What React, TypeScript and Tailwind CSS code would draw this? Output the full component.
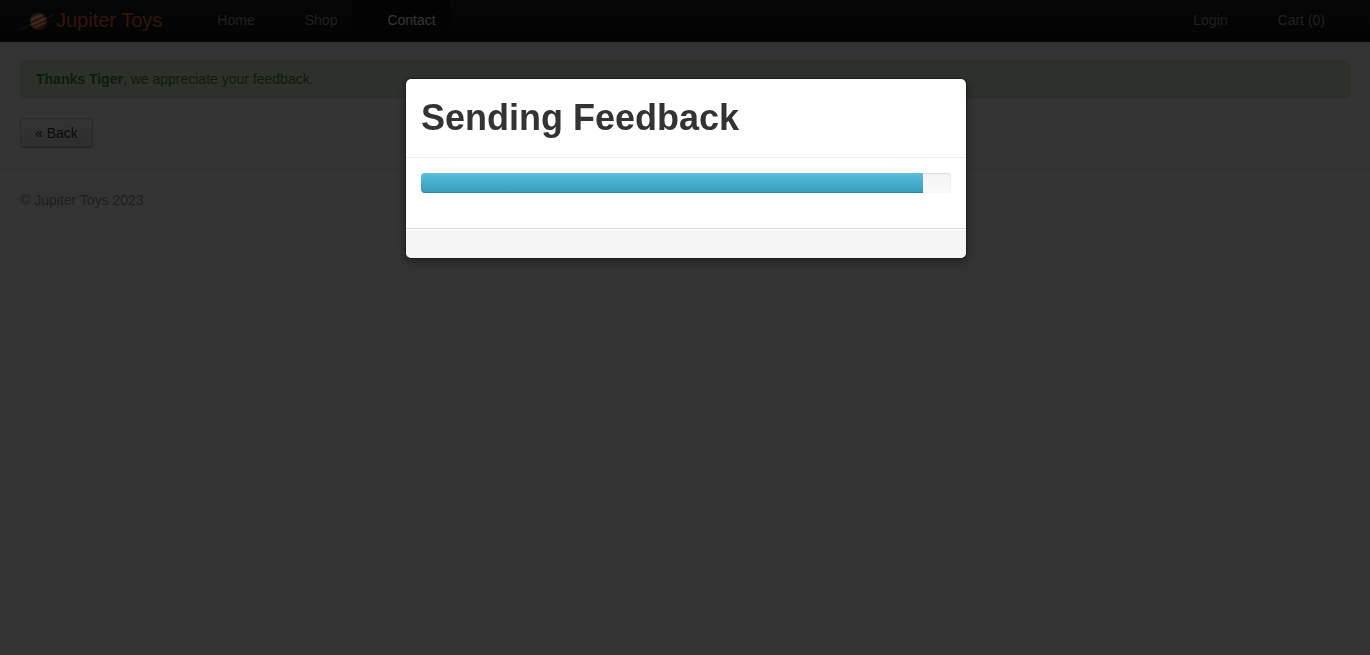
import React from "react";

const navLink =
  "block py-[10px] pl-[35px] pr-[15px] text-[#999] [text-shadow:0_-1px_0_rgba(0,0,0,.25)]";
const activeLink =
  "block bg-[#111] pt-[10px] pb-[11px] pl-[35px] pr-[15px] text-white shadow-[inset_0_3px_8px_rgba(0,0,0,.125)] [text-shadow:0_-1px_0_rgba(0,0,0,.25)]";

function PlanetLogo() {
  return (
    <svg viewBox="0 0 34 24" className="mt-px h-6 w-[34px]" aria-hidden="true">
      <defs>
        <radialGradient id="shade" cx="0.45" cy="0.45" r="0.6">
          <stop offset="0.6" stopColor="#400" stopOpacity="0" />
          <stop offset="1" stopColor="#400" stopOpacity="0.6" />
        </radialGradient>
        <clipPath id="disc">
          <circle cx="18.5" cy="12.5" r="8.5" />
        </clipPath>
      </defs>
      <path d="M0 20.5 L34 5.5" stroke="#777" strokeWidth="0.7" />
      <g clipPath="url(#disc)">
        <rect x="9" y="3" width="20" height="20" fill="#ee7c4a" />
        <g transform="rotate(-24 18.5 12.5)">
          <rect x="8" y="4" width="21" height="2.5" fill="#b5664a" />
          <rect x="8" y="6.5" width="21" height="3" fill="#ffd2ac" />
          <rect x="8" y="9.5" width="21" height="2" fill="#d8572c" />
          <rect x="8" y="11.5" width="21" height="2" fill="#ffe6cc" />
          <rect x="8" y="13.5" width="21" height="2" fill="#e0622f" />
          <rect x="8" y="15.5" width="21" height="1.5" fill="#ffc39a" />
          <rect x="8" y="18" width="21" height="4" fill="#c0502e" />
        </g>
        <circle cx="18.5" cy="12.5" r="8.5" fill="url(#shade)" />
      </g>
    </svg>
  );
}

function Navbar() {
  return (
    <header className="flex h-[42px] items-start justify-between overflow-visible border-b border-[#252525] bg-linear-to-b from-[#222] to-[#111] px-5 shadow-[0_1px_10px_rgba(0,0,0,.1)]">
      <nav className="flex" aria-label="Main">
        <a
          href="#home"
          className="flex items-start gap-[2px] pt-2 pr-5 text-xl leading-6 text-[#f07030] [text-shadow:0_-1px_0_rgba(0,0,0,.25)]"
        >
          <PlanetLogo />
          Jupiter Toys
        </a>
        <ul className="flex">
          <li><a href="#home" className={navLink}>Home</a></li>
          <li><a href="#shop" className={navLink}>Shop</a></li>
          <li><a href="#contact" aria-current="page" className={activeLink}>Contact</a></li>
        </ul>
      </nav>
      <ul className="mr-[10px] flex">
        <li><a href="#login" className={navLink}>Login</a></li>
        <li><a href="#cart" className={navLink}>Cart (0)</a></li>
      </ul>
    </header>
  );
}

function FeedbackDialog({ progress }: { progress: number }) {
  return (
    <div className="fixed inset-0 flex items-start justify-center bg-black/80 pt-[78px] pl-[2px]">
      <section
        role="dialog"
        aria-modal="true"
        aria-labelledby="dialog-title"
        className="w-full max-w-[562px] rounded-md border border-black/30 bg-white bg-clip-padding shadow-[0_3px_10px_rgba(0,0,0,.35)]"
      >
        <div className="border-b border-[#eee] px-[15px] py-[19px]">
          <h1 id="dialog-title" className="text-4xl font-bold leading-10">Sending Feedback</h1>
        </div>
        <div className="px-[15px] pt-[15px] pb-[35px]">
          <div
            role="progressbar"
            aria-label="Sending feedback"
            aria-valuenow={progress}
            aria-valuemin={0}
            aria-valuemax={100}
            className="h-5 overflow-hidden rounded bg-linear-to-b from-[#f5f5f5] to-[#f9f9f9] shadow-[inset_0_1px_2px_rgba(0,0,0,.1)]"
          >
            <div
              className="h-full bg-linear-to-b from-[#5bc0de] to-[#339bb9] shadow-[inset_0_-1px_0_rgba(0,0,0,.15)]"
              style={{ width: `${progress}%` }}
            />
          </div>
        </div>
        <div className="h-[30px] rounded-b-md border-t border-[#ddd] bg-[#f5f5f5] shadow-[inset_0_1px_0_#fff]" />
      </section>
    </div>
  );
}

export default function App() {
  return (
    <div className="min-h-screen bg-white font-['Liberation_Sans',Arial,sans-serif] text-sm leading-5 text-[#333]">
      <Navbar />
      <main className="px-5 pt-[18px]">
        <div
          role="status"
          className="mb-5 rounded border border-[#d6e9c6] bg-[#dff0d8] py-2 pr-[35px] pl-[15px] text-[#468847] [text-shadow:0_1px_0_rgba(255,255,255,.5)]"
        >
          <strong>Thanks Tiger</strong>, we appreciate your feedback.
        </div>
        <button
          type="button"
          className="block rounded border border-[#ccc] border-b-[#b3b3b3] bg-linear-to-b from-white to-[#e6e6e6] px-[14px] py-1 shadow-[inset_0_1px_0_rgba(255,255,255,.2),0_1px_2px_rgba(0,0,0,.05)] [text-shadow:0_1px_1px_rgba(255,255,255,.75)]"
        >
          « Back
        </button>
      </main>
      <hr className="my-5 border-t border-b border-t-[#eee] border-b-white" />
      <footer className="px-5 text-[#999]">© Jupiter Toys 2023</footer>
      <FeedbackDialog progress={94.7} />
    </div>
  );
}
